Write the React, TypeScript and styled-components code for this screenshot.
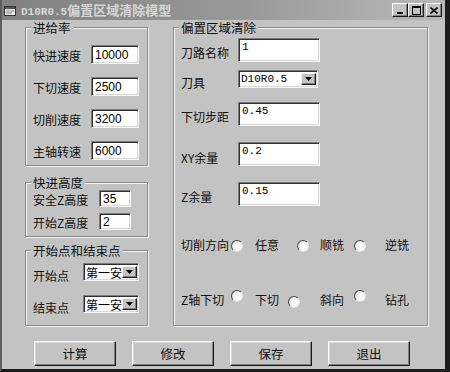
import styled, { createGlobalStyle } from "styled-components";

const GlobalStyle = createGlobalStyle`
  html, body {
    margin: 0;
    padding: 0;
    background: #c3c3c3;
  }
`;

const Window = styled.div`
  width: 450px;
  height: 372px;
  box-sizing: border-box;
  overflow: hidden;

  display: flex;
  flex-direction: column;

  background: #c3c3c3;
  border-left: 2px solid #5e5e5e;
  border-right: 5px solid #1c1c1c;
  border-bottom: 3px solid #1c1c1c;

  font-family: "Noto Sans CJK SC", "Liberation Sans", sans-serif;
  font-size: 12px;
  color: #111;
`;

const TitleBar = styled.div`
  height: 20px;
  flex: none;
  padding: 0 3px 0 2px;

  display: flex;
  align-items: center;

  background: linear-gradient(90deg, #808080 0%, #999 55%, #b9b9b9 100%);
`;

const TitleText = styled.div`
  margin-left: 5px;
  display: flex;
  align-items: baseline;
  color: #d6d6d6;
  font-weight: 700;
  white-space: nowrap;
`;

const TitleAscii = styled.span`
  font-family: "Liberation Mono", monospace;
  font-size: 11px;
`;

const TitleCjk = styled.span`
  font-size: 13px;
  line-height: 16px;
`;

const TitleButtons = styled.div`
  margin-left: auto;
  display: flex;
`;

const CapButton = styled.div<{ $gapLeft?: number }>`
  width: 16px;
  height: 14px;
  box-sizing: border-box;
  margin-left: ${(p) => p.$gapLeft ?? 0}px;

  display: flex;
  align-items: center;
  justify-content: center;

  background: #c3c3c3;
  border: 1px solid;
  border-color: #fff #1a1a1a #1a1a1a #fff;
  box-shadow: inset -1px -1px #808080;
`;

const Body = styled.div`
  flex: 1;
  padding: 7px 0 0 23px;
  display: flex;
  flex-direction: column;
`;

const MainRow = styled.div`
  display: flex;
  gap: 25px;
`;

const LeftColumn = styled.div`
  width: 123px;
  display: flex;
  flex-direction: column;
`;

const Group = styled.div<{ $h: number; $w: number; $mb?: number }>`
  width: ${(p) => p.$w}px;
  height: ${(p) => p.$h}px;
  box-sizing: border-box;
  margin-bottom: ${(p) => p.$mb ?? 0}px;
  padding: 0 6px 0 7px;

  display: flex;
  flex-direction: column;

  border: 1px solid #8a8a8a;
  box-shadow: inset 1px 1px #f4f4f4, 1px 1px #f4f4f4;
`;

const Legend = styled.div`
  width: fit-content;
  height: 14px;
  margin: -7px 0 0 -2px;
  padding: 0 2px;

  background: #c3c3c3;
  font-size: 12.5px;
  line-height: 14px;
`;

const Rows = styled.div<{ $top: number; $gap: number }>`
  margin-top: ${(p) => p.$top}px;
  display: flex;
  flex-direction: column;
  gap: ${(p) => p.$gap}px;
`;

const FieldRow = styled.div<{ $h: number; $mt?: number }>`
  height: ${(p) => p.$h}px;
  margin-top: ${(p) => p.$mt ?? 0}px;
  display: flex;
  align-items: center;
`;

const Label = styled.span<{ $w: number; $drop?: number }>`
  width: ${(p) => p.$w}px;
  flex: none;
  padding-top: ${(p) => p.$drop ?? 2}px;
  font-size: 12px;
  white-space: nowrap;
`;

const TextBox = styled.div<{ $w: number; $h: number; $top?: boolean; $mono?: boolean }>`
  width: ${(p) => p.$w}px;
  height: ${(p) => p.$h}px;
  box-sizing: border-box;
  flex: none;
  padding: ${(p) => (p.$top ? "2px 0 0 3px" : "1px 0 0 3px")};

  display: flex;
  align-items: ${(p) => (p.$top ? "flex-start" : "center")};

  background: #fff;
  border: 1px solid;
  border-color: #7a7a7a #f8f8f8 #f8f8f8 #7a7a7a;
  box-shadow: inset 1px 1px #303030, inset -1px -1px #d8d8d8;

  font-family: ${(p) =>
    p.$mono ? '"Liberation Mono", monospace' : '"Liberation Sans", sans-serif'};
  font-size: ${(p) => (p.$mono ? 11 : 12)}px;
  line-height: 13px;
  color: #000;
`;

const Combo = styled.div<{ $w: number; $h: number; $mono?: boolean }>`
  width: ${(p) => p.$w}px;
  height: ${(p) => p.$h}px;
  box-sizing: border-box;
  flex: none;
  padding: 2px 1px 2px 2px;

  display: flex;
  align-items: center;
  overflow: hidden;

  background: #fff;
  border: 1px solid;
  border-color: #7a7a7a #f8f8f8 #f8f8f8 #7a7a7a;
  box-shadow: inset 1px 1px #303030, inset -1px -1px #d8d8d8;

  font-family: ${(p) =>
    p.$mono
      ? '"Liberation Mono", monospace'
      : '"Noto Sans CJK SC", sans-serif'};
  font-size: ${(p) => (p.$mono ? 11 : 12)}px;
  color: #000;
`;

const ComboText = styled.span`
  flex: 1;
  white-space: nowrap;
`;

const ComboArrow = styled.div`
  width: 15px;
  height: 100%;
  box-sizing: border-box;
  flex: none;

  display: flex;
  align-items: center;
  justify-content: center;

  background: #c3c3c3;
  border: 1px solid;
  border-color: #f4f4f4 #1a1a1a #1a1a1a #f4f4f4;
  box-shadow: inset -1px -1px #808080;
`;

const RadioRow = styled.div<{ $mt: number }>`
  height: 20px;
  margin-top: ${(p) => p.$mt}px;
  display: flex;
  align-items: center;
  font-size: 12px;
`;

const Radio = styled.span<{ $ml?: number; $dy?: number }>`
  width: 12px;
  height: 12px;
  box-sizing: border-box;
  flex: none;
  margin-left: ${(p) => p.$ml ?? 0}px;
  transform: translateY(${(p) => p.$dy ?? 0}px);

  border-radius: 50%;
  border: 1px solid;
  border-color: #4a4a4a #e6e6e6 #e6e6e6 #4a4a4a;
  background: radial-gradient(circle at 60% 60%, #fff 0%, #f2f2f2 50%, #cfcfcf 100%);
`;

const OptionText = styled.span<{ $ml: number }>`
  margin-left: ${(p) => p.$ml}px;
  padding-top: 2px;
  white-space: nowrap;
`;

const ButtonRow = styled.div`
  margin: 15px 0 0 9px;
  display: flex;
  gap: 16px;
`;

const PushButton = styled.button`
  width: 82px;
  height: 25px;
  box-sizing: border-box;
  padding: 0;

  background: #c3c3c3;
  border: 1px solid;
  border-color: #fafafa #1a1a1a #1a1a1a #fafafa;
  box-shadow: inset -1px -1px #808080, inset 1px 1px #dedede;

  font-family: "Noto Sans CJK SC", sans-serif;
  font-size: 12.5px;
  color: #111;
`;

const DownTriangle = () => (
  <svg width="7" height="4" viewBox="0 0 7 4">
    <path d="M0 0h7L3.5 4z" fill="#000" />
  </svg>
);

const WindowIcon = () => (
  <svg width="12" height="11" viewBox="0 0 12 11">
    <rect x="0.5" y="1.5" width="11" height="9" fill="#e8e8e8" stroke="#333" />
    <rect x="1" y="2" width="10" height="2" fill="#555" />
    <path d="M2 6h8M2 8h6" stroke="#888" />
  </svg>
);

const leftSpeeds = [
  { label: "快进速度", value: "10000" },
  { label: "下切速度", value: "2500" },
  { label: "切削速度", value: "3200" },
  { label: "主轴转速", value: "6000" },
];

export default function App() {
  return (
    <>
      <GlobalStyle />
      <Window>
        <TitleBar>
          <WindowIcon />
          <TitleText>
            <TitleAscii>D10R0.5</TitleAscii>
            <TitleCjk>偏置区域清除模型</TitleCjk>
          </TitleText>
          <TitleButtons>
            <CapButton>
              <svg width="8" height="8" viewBox="0 0 8 8">
                <rect x="1" y="6" width="6" height="2" fill="#000" />
              </svg>
            </CapButton>
            <CapButton>
              <svg width="9" height="9" viewBox="0 0 9 9">
                <rect x="0.5" y="0.5" width="8" height="8" fill="none" stroke="#000" />
                <rect x="0" y="0" width="9" height="2" fill="#000" />
              </svg>
            </CapButton>
            <CapButton $gapLeft={2}>
              <svg width="8" height="7" viewBox="0 0 8 7">
                <path d="M0.5 0.5l7 6M7.5 0.5l-7 6" stroke="#000" strokeWidth="1.6" />
              </svg>
            </CapButton>
          </TitleButtons>
        </TitleBar>

        <Body>
          <MainRow>
            <LeftColumn>
              <Group $w={123} $h={139} $mb={16}>
                <Legend>进给率</Legend>
                <Rows $top={10} $gap={13}>
                  {leftSpeeds.map((f) => (
                    <FieldRow key={f.label} $h={19}>
                      <Label $w={58}>{f.label}</Label>
                      <TextBox $w={48} $h={19}>
                        {f.value}
                      </TextBox>
                    </FieldRow>
                  ))}
                </Rows>
              </Group>

              <Group $w={123} $h={55} $mb={13}>
                <Legend>快进高度</Legend>
                <Rows $top={0} $gap={6}>
                  <FieldRow $h={17}>
                    <Label $w={66}>安全Z高度</Label>
                    <TextBox $w={32} $h={17}>
                      35
                    </TextBox>
                  </FieldRow>
                  <FieldRow $h={17}>
                    <Label $w={66}>开始Z高度</Label>
                    <TextBox $w={32} $h={17}>
                      2
                    </TextBox>
                  </FieldRow>
                </Rows>
              </Group>

              <Group $w={123} $h={76}>
                <Legend>开始点和结束点</Legend>
                <Rows $top={5} $gap={14}>
                  <FieldRow $h={18}>
                    <Label $w={50} $drop={6}>
                      开始点
                    </Label>
                    <Combo $w={56} $h={18}>
                      <ComboText>第一安</ComboText>
                      <ComboArrow>
                        <DownTriangle />
                      </ComboArrow>
                    </Combo>
                  </FieldRow>
                  <FieldRow $h={18}>
                    <Label $w={50} $drop={6}>
                      结束点
                    </Label>
                    <Combo $w={56} $h={18}>
                      <ComboText>第一安</ComboText>
                      <ComboArrow>
                        <DownTriangle />
                      </ComboArrow>
                    </Combo>
                  </FieldRow>
                </Rows>
              </Group>
            </LeftColumn>

            <Group $w={255} $h={299}>
              <Legend>偏置区域清除</Legend>
              <FieldRow $h={24} $mt={3}>
                <Label $w={57} $drop={4}>
                  刀路名称
                </Label>
                <TextBox $w={82} $h={24} $top $mono>
                  1
                </TextBox>
              </FieldRow>
              <FieldRow $h={18} $mt={8}>
                <Label $w={57} $drop={6}>
                  刀具
                </Label>
                <Combo $w={80} $h={18} $mono>
                  <ComboText>D10R0.5</ComboText>
                  <ComboArrow>
                    <DownTriangle />
                  </ComboArrow>
                </Combo>
              </FieldRow>
              <FieldRow $h={24} $mt={14}>
                <Label $w={57} $drop={4}>
                  下切步距
                </Label>
                <TextBox $w={82} $h={24} $top $mono>
                  0.45
                </TextBox>
              </FieldRow>
              <FieldRow $h={24} $mt={16}>
                <Label $w={57} $drop={6}>
                  XY余量
                </Label>
                <TextBox $w={82} $h={24} $top $mono>
                  0.2
                </TextBox>
              </FieldRow>
              <FieldRow $h={24} $mt={16}>
                <Label $w={57} $drop={4}>
                  Z余量
                </Label>
                <TextBox $w={82} $h={24} $top $mono>
                  0.15
                </TextBox>
              </FieldRow>

              <RadioRow $mt={27}>
                <Label $w={50}>切削方向</Label>
                <Radio $dy={3} />
                <OptionText $ml={12}>任意</OptionText>
                <Radio $ml={18} $dy={3} />
                <OptionText $ml={11}>顺铣</OptionText>
                <Radio $ml={10} $dy={3} />
                <OptionText $ml={19}>逆铣</OptionText>
              </RadioRow>

              <RadioRow $mt={35}>
                <Label $w={50}>Z轴下切</Label>
                <Radio $dy={-2} />
                <OptionText $ml={12}>下切</OptionText>
                <Radio $ml={9} $dy={4} />
                <OptionText $ml={20}>斜向</OptionText>
                <Radio $ml={10} $dy={-2} />
                <OptionText $ml={19}>钻孔</OptionText>
              </RadioRow>
            </Group>
          </MainRow>

          <ButtonRow>
            <PushButton>计算</PushButton>
            <PushButton>修改</PushButton>
            <PushButton>保存</PushButton>
            <PushButton>退出</PushButton>
          </ButtonRow>
        </Body>
      </Window>
    </>
  );
}
